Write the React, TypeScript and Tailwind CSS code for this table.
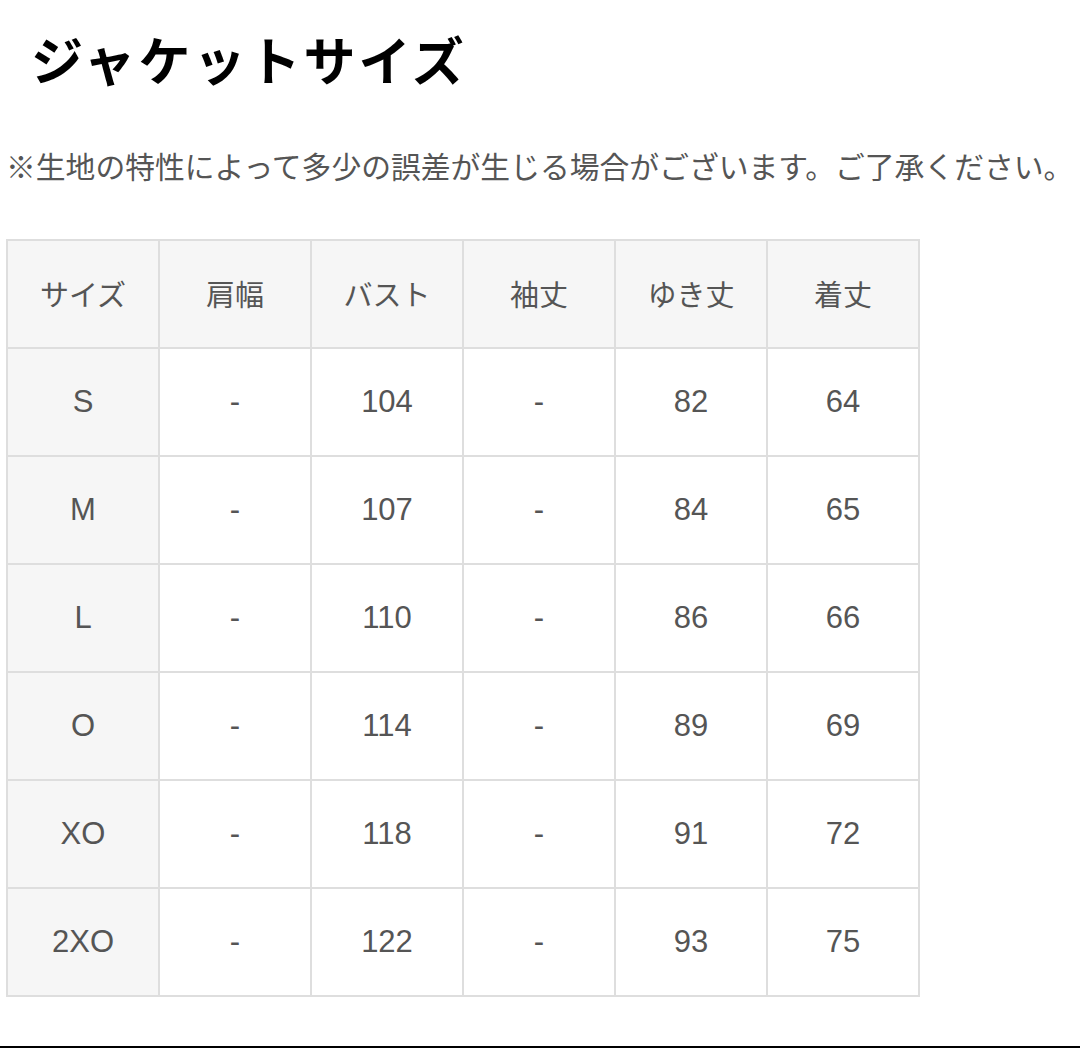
import React from 'react';

const headers = ['サイズ', '肩幅', 'バスト', '袖丈', 'ゆき丈', '着丈'];

const rows: string[][] = [
  ['S', '-', '104', '-', '82', '64'],
  ['M', '-', '107', '-', '84', '65'],
  ['L', '-', '110', '-', '86', '66'],
  ['O', '-', '114', '-', '89', '69'],
  ['XO', '-', '118', '-', '91', '72'],
  ['2XO', '-', '122', '-', '93', '75'],
];

const App: React.FC = () => {
  return (
    <div
      className="w-[1080px] h-[1048px] bg-white flex flex-col border-b-[2px] border-black overflow-hidden"
      style={{ fontFamily: '"Liberation Sans", "Noto Sans CJK JP", sans-serif' }}
    >
      {/* Title */}
      <h1
        className="pl-[31px] pt-[24px] h-[126px] text-[52px] leading-[70px] font-bold tracking-[3px] text-black"
        style={{ fontFamily: '"Noto Sans CJK JP", sans-serif' }}
      >
        ジャケットサイズ
      </h1>

      {/* Note */}
      <p
        className="pl-[6px] h-[113px] text-[29.8px] leading-[78px] text-[#555] whitespace-nowrap"
        style={{ fontFamily: '"Noto Sans CJK JP", sans-serif' }}
      >
        ※生地の特性によって多少の誤差が生じる場合がございます。ご了承ください。
      </p>

      {/* Size table */}
      <div className="pl-[6px]">
        <table className="border-collapse border-[2px] border-[#dedede] text-[#555] text-[31px]">
          <thead>
            <tr className="h-[108px] bg-[#f6f6f6]">
              {headers.map((h) => (
                <th
                  key={h}
                  className="w-[152px] border-[2px] border-[#dedede] font-normal text-center text-[29px]"
                  style={{ fontFamily: '"Noto Sans CJK JP", sans-serif' }}
                >
                  {h}
                </th>
              ))}
            </tr>
          </thead>
          <tbody>
            {rows.map((r) => (
              <tr key={r[0]} className="h-[108px]">
                {r.map((v, i) => (
                  <td
                    key={i}
                    className={`w-[152px] border-[2px] border-[#dedede] text-center ${i === 0 ? 'bg-[#f6f6f6]' : 'bg-white'}`}
                  >
                    {v}
                  </td>
                ))}
              </tr>
            ))}
          </tbody>
        </table>
      </div>
    </div>
  );
};

export default App;
